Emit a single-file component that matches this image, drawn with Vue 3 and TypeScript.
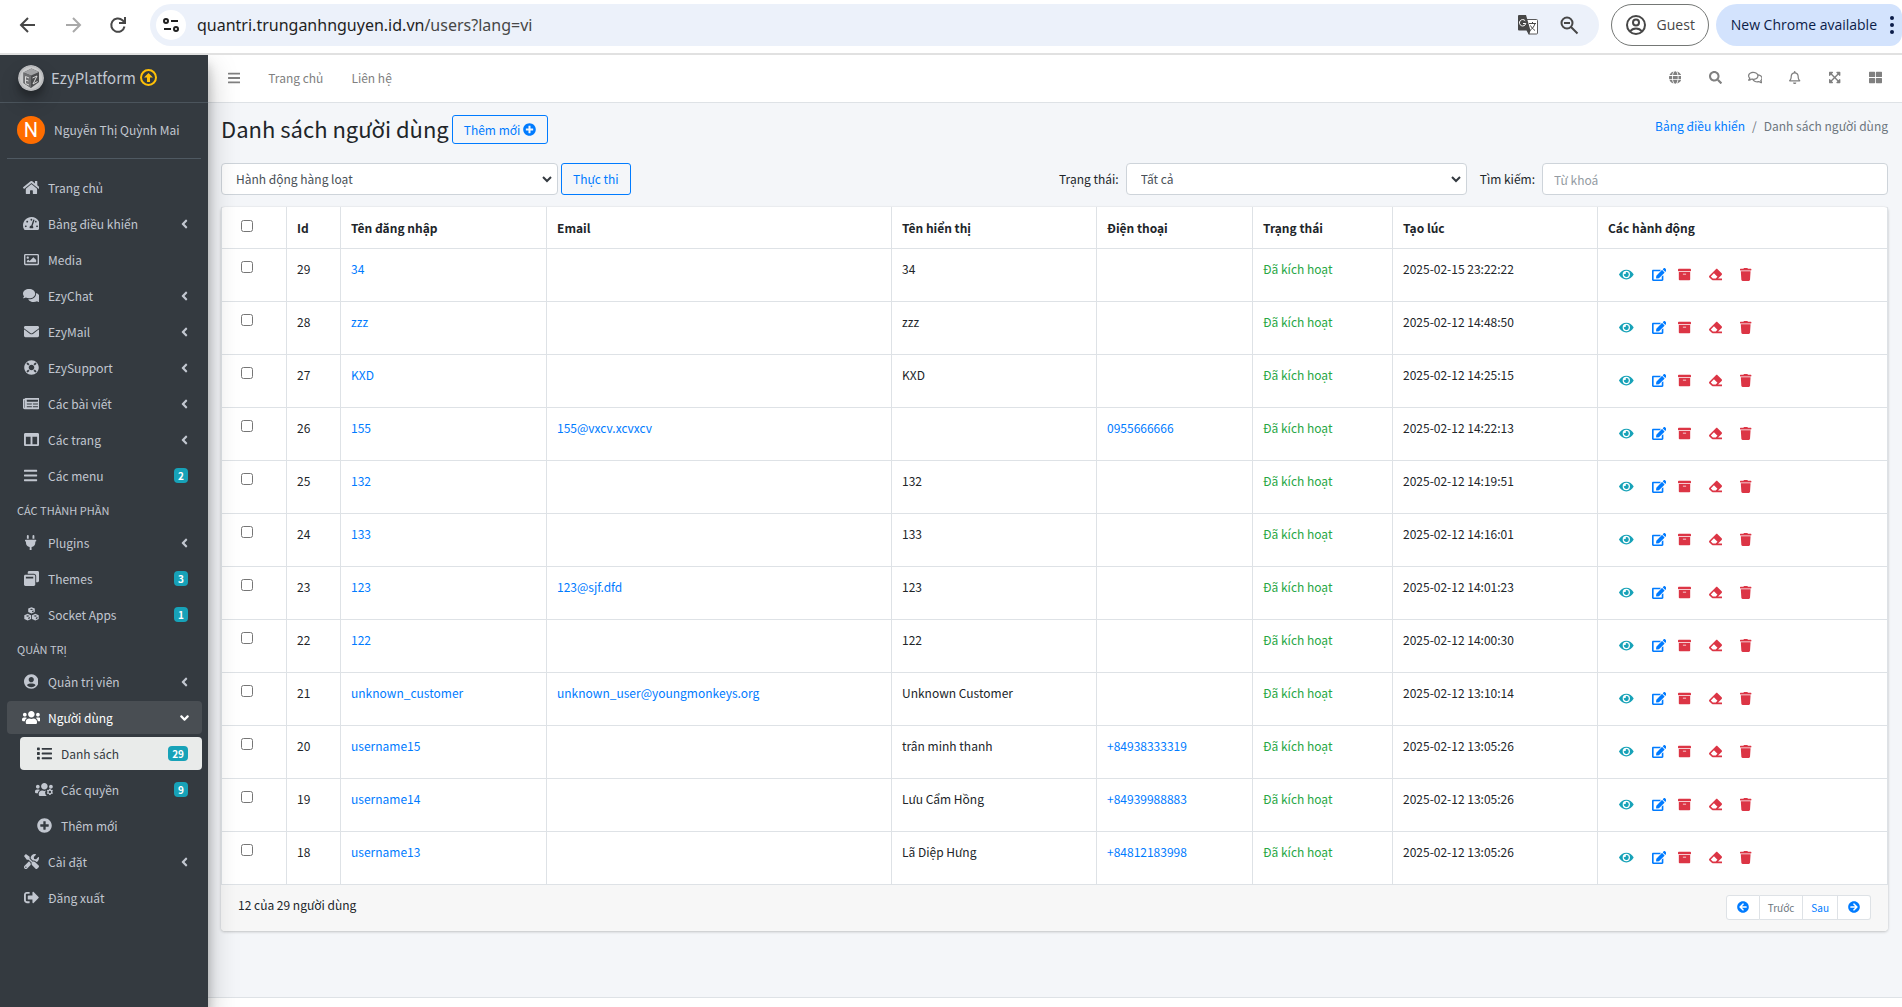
<script setup lang="ts">
import { h, ref } from 'vue'
import type { FunctionalComponent } from 'vue'

type Glyph = [width: number, path: string]

const glyphs: Record<string, Glyph> = {
  home: [576, 'M280.37 148.26L96 300.11V464a16 16 0 0 0 16 16l112.06-.29a16 16 0 0 0 15.92-16V368a16 16 0 0 1 16-16h64a16 16 0 0 1 16 16v95.64a16 16 0 0 0 16 16.05L464 480a16 16 0 0 0 16-16V300L295.67 148.26a12.19 12.19 0 0 0-15.3 0zM571.6 251.47L488 182.56V44.05a12 12 0 0 0-12-12h-56a12 12 0 0 0-12 12v72.61L318.47 43a48 48 0 0 0-61 0L4.34 251.47a12 12 0 0 0-1.6 16.9l25.5 31A12 12 0 0 0 45.15 301l235.22-193.74a12.19 12.19 0 0 1 15.3 0L530.9 301a12 12 0 0 0 16.9-1.6l25.5-31a12 12 0 0 0-1.7-16.93z'],
  gauge: [576, 'M288 32C128.94 32 0 160.94 0 320c0 52.8 14.25 102.26 39.06 144.8 5.61 9.62 16.3 15.2 27.44 15.2h443c11.14 0 21.83-5.58 27.44-15.2C561.75 422.26 576 372.8 576 320c0-159.06-128.94-288-288-288zm0 64c14.71 0 26.58 10.13 30.32 23.65-1.11 2.26-2.64 4.23-3.45 6.67l-9.22 27.67c-5.13 3.49-10.97 6.01-17.64 6.01-17.67 0-32-14.33-32-32S270.33 96 288 96zM96 384c-17.67 0-32-14.33-32-32s14.33-32 32-32 32 14.33 32 32-14.33 32-32 32zm48-160c-17.67 0-32-14.33-32-32s14.33-32 32-32 32 14.33 32 32-14.33 32-32 32zm246.77-72.41l-61.33 184C343.13 347.33 352 364.54 352 384c0 11.72-3.38 22.55-8.88 32H232.88c-5.5-9.45-8.88-20.28-8.88-32 0-33.94 26.5-61.43 59.9-63.59l61.34-184.01c4.17-12.56 17.73-19.45 30.36-15.17 12.57 4.19 19.35 17.79 15.17 30.36zm14.66 57.2l15.52-46.55c3.47-1.29 7.13-2.23 11.05-2.23 17.67 0 32 14.33 32 32s-14.33 32-32 32c-11.38-.01-20.89-6.28-26.57-15.22zM480 384c-17.67 0-32-14.33-32-32s14.33-32 32-32 32 14.33 32 32-14.33 32-32 32z'],
  image: [512, 'M464 64H48C21.49 64 0 85.49 0 112v288c0 26.51 21.49 48 48 48h416c26.51 0 48-21.49 48-48V112c0-26.51-21.49-48-48-48zm-6 336H54a6 6 0 0 1-6-6V118a6 6 0 0 1 6-6h404a6 6 0 0 1 6 6v276a6 6 0 0 1-6 6zM128 152c-22.091 0-40 17.909-40 40s17.909 40 40 40 40-17.909 40-40-17.909-40-40-40zM96 352h320v-80l-87.515-87.515c-4.686-4.686-12.284-4.686-16.971 0L192 304l-39.515-39.515c-4.686-4.686-12.284-4.686-16.971 0L96 304v48z'],
  comments: [576, 'M416 192c0-88.4-93.1-160-208-160S0 103.6 0 192c0 34.3 14.1 65.9 38 92-13.4 30.2-35.5 54.2-35.8 54.5-2.2 2.3-2.8 5.7-1.5 8.7S4.8 352 8 352c36.6 0 66.9-12.3 88.7-25 32.2 15.7 70.3 25 111.3 25 114.9 0 208-71.6 208-160zm122 220c23.9-26 38-57.7 38-92 0-66.9-53.5-124.2-129.3-148.1.9 6.6 1.3 13.3 1.3 20.1 0 105.9-107.7 192-240 192-10.8 0-21.3-.8-31.7-1.9C207.8 439.6 281.8 480 368 480c41 0 79.1-9.2 111.3-25 21.8 12.7 52.1 25 88.7 25 3.2 0 6.1-1.9 7.3-4.8 1.3-2.9.7-6.3-1.5-8.7-.3-.3-22.4-24.2-35.8-54.5z'],
  commentsLine: [576, 'M532 386.2c27.5-27.1 44-61.1 44-98.2 0-80-76.5-146.1-176.2-157.9C368.3 72.5 294.3 32 208 32 93.1 32 0 103.6 0 192c0 37 16.5 71 44 98.2-15.3 30.7-37.3 54.5-37.7 54.9-6.3 6.7-8.1 16.5-4.4 25 3.6 8.5 12 14 21.2 14 53.5 0 96.7-20.2 125.2-38.8 9.2 2.1 18.7 3.7 28.4 4.9C208.1 407.6 281.8 448 368 448c20.8 0 40.8-2.4 59.8-6.8C456.3 459.7 499.4 480 553 480c9.2 0 17.5-5.5 21.2-14 3.6-8.5 1.9-18.3-4.4-25-.4-.3-22.5-24.1-37.8-54.8zm-392.8-92.3L122.1 305c-14.1 9.1-28.5 16.3-43.1 21.4 2.7-4.7 5.4-9.7 8-14.8l15.5-31.1L77.7 256C64.2 242.6 48 220.7 48 192c0-60.7 73.3-112 160-112s160 51.3 160 112-73.3 112-160 112c-16.5 0-33-1.9-49-5.6l-19.8-4.5zM498.3 352l-24.7 24.4 15.5 31.1c2.6 5.1 5.3 10.1 8 14.8-14.6-5.1-29-12.3-43.1-21.4l-17.1-11.1-19.9 4.6c-16 3.7-32.5 5.6-49 5.6-54 0-102.2-20.1-131.3-49.7C338 339.5 416 272.9 416 192c0-3.4-.4-6.7-.7-10C479.7 196.5 528 238.8 528 288c0 28.7-16.2 50.6-29.7 64z'],
  envelope: [512, 'M502.3 190.8c3.9-3.1 9.7-.2 9.7 4.7V400c0 26.5-21.5 48-48 48H48c-26.5 0-48-21.5-48-48V195.6c0-5 5.7-7.8 9.7-4.7 22.4 17.4 52.1 39.5 154.1 113.6 21.1 15.4 56.7 47.8 92.2 47.6 35.7.3 72-32.8 92.3-47.6 102-74.1 131.6-96.3 154-113.7zM256 320c23.2.4 56.6-29.2 73.4-41.4 132.7-96.3 142.8-104.7 173.4-128.7 5.8-4.5 9.2-11.5 9.2-18.9v-19c0-26.5-21.5-48-48-48H48c-26.5 0-48 21.5-48 48v19c0 7.4 3.4 14.3 9.2 18.9 30.6 23.9 40.7 32.4 173.4 128.7 16.8 12.2 50.2 41.8 73.4 41.4z'],
  lifeRing: [512, 'M256 8C119.033 8 8 119.033 8 256s111.033 248 248 248 248-111.033 248-248S392.967 8 256 8zm173.696 119.559l-63.399 63.399c-10.987-18.559-26.67-34.252-45.255-45.255l63.399-63.399a218.396 218.396 0 0 1 45.255 45.255zM256 352c-53.019 0-96-42.981-96-96s42.981-96 96-96 96 42.981 96 96-42.981 96-96 96zM127.559 82.304l63.399 63.399c-18.559 10.987-34.252 26.67-45.255 45.255l-63.399-63.399a218.372 218.372 0 0 1 45.255-45.255zM82.304 384.441l63.399-63.399c10.987 18.559 26.67 34.252 45.255 45.255l-63.399 63.399a218.396 218.396 0 0 1-45.255-45.255zm302.137 45.255l-63.399-63.399c18.559-10.987 34.252-26.67 45.255-45.255l63.399 63.399a218.403 218.403 0 0 1-45.255 45.255z'],
  newspaper: [576, 'M552 64H88c-13.255 0-24 10.745-24 24v8H24c-13.255 0-24 10.745-24 24v272c0 30.928 25.072 56 56 56h472c26.51 0 48-21.49 48-48V88c0-13.255-10.745-24-24-24zM56 400a8 8 0 0 1-8-8V144h16v248a8 8 0 0 1-8 8zm236-16H140c-6.627 0-12-5.373-12-12v-8c0-6.627 5.373-12 12-12h152c6.627 0 12 5.373 12 12v8c0 6.627-5.373 12-12 12zm208 0H348c-6.627 0-12-5.373-12-12v-8c0-6.627 5.373-12 12-12h152c6.627 0 12 5.373 12 12v8c0 6.627-5.373 12-12 12zm-208-96H140c-6.627 0-12-5.373-12-12v-8c0-6.627 5.373-12 12-12h152c6.627 0 12 5.373 12 12v8c0 6.627-5.373 12-12 12zm208 0H348c-6.627 0-12-5.373-12-12v-8c0-6.627 5.373-12 12-12h152c6.627 0 12 5.373 12 12v8c0 6.627-5.373 12-12 12zm0-96H140c-6.627 0-12-5.373-12-12v-40c0-6.627 5.373-12 12-12h360c6.627 0 12 5.373 12 12v40c0 6.627-5.373 12-12 12z'],
  columns: [512, 'M464 32H48C21.49 32 0 53.49 0 80v352c0 26.51 21.49 48 48 48h416c26.51 0 48-21.49 48-48V80c0-26.51-21.49-48-48-48zM224 416H64V160h160v256zm224 0H288V160h160v256z'],
  bars: [448, 'M16 132h416c8.837 0 16-7.163 16-16V76c0-8.837-7.163-16-16-16H16C7.163 60 0 67.163 0 76v40c0 8.837 7.163 16 16 16zm0 160h416c8.837 0 16-7.163 16-16v-40c0-8.837-7.163-16-16-16H16c-8.837 0-16 7.163-16 16v40c0 8.837 7.163 16 16 16zm0 160h416c8.837 0 16-7.163 16-16v-40c0-8.837-7.163-16-16-16H16c-8.837 0-16 7.163-16 16v40c0 8.837 7.163 16 16 16z'],
  plug: [384, 'M320,32a32,32,0,0,0-64,0v96h64Zm48,128H16A16,16,0,0,0,0,176v32a16,16,0,0,0,16,16H32v32A160.07,160.07,0,0,0,160,412.8V512h64V412.8A160.07,160.07,0,0,0,352,256V224h16a16,16,0,0,0,16-16V176A16,16,0,0,0,368,160ZM128,32a32,32,0,0,0-64,0v96h64Z'],
  windows: [512, 'M512 48v288c0 26.5-21.5 48-48 48h-48V176c0-44.1-35.9-80-80-80H128V48c0-26.5 21.5-48 48-48h288c26.5 0 48 21.5 48 48zM384 176v288c0 26.5-21.5 48-48 48H48c-26.5 0-48-21.5-48-48V176c0-26.5 21.5-48 48-48h288c26.5 0 48 21.5 48 48zm-68 28c0-6.6-5.4-12-12-12H76c-6.6 0-12 5.4-12 12v52h252v-52z'],
  cubes: [512, 'M256 8l112 44v118l-112 48-112-48V52zM256 58l-62 22 62 24 62-24zM276 138v44l52-22v-44zM126 232l116 48v126l-116 56-116-56V280zM126 280l-62 24 62 26 62-26zM146 366v48l56-26v-46zM386 232l116 48v126l-116 56-116-56V280zM386 280l-62 24 62 26 62-26zM406 366v48l56-26v-46z'],
  userCircle: [496, 'M248 8C111 8 0 119 0 256s111 248 248 248 248-111 248-248S385 8 248 8zm0 96c48.6 0 88 39.4 88 88s-39.4 88-88 88-88-39.4-88-88 39.4-88 88-88zm0 344c-58.7 0-111.3-26.6-146.5-68.2 18.8-35.4 55.6-59.8 98.5-59.8 2.4 0 4.8.4 7.1 1.1 13 4.2 26.6 6.9 40.9 6.9 14.3 0 28-2.7 40.9-6.9 2.3-.7 4.7-1.1 7.1-1.1 42.9 0 79.7 24.4 98.5 59.8C359.3 421.4 306.7 448 248 448z'],
  users: [640, 'M96 224c35.3 0 64-28.7 64-64s-28.7-64-64-64-64 28.7-64 64 28.7 64 64 64zm448 0c35.3 0 64-28.7 64-64s-28.7-64-64-64-64 28.7-64 64 28.7 64 64 64zm32 32h-64c-17.6 0-33.5 7.1-45.1 18.6 40.3 22.1 68.9 62 75.1 109.4h66c17.7 0 32-14.3 32-32v-32c0-35.3-28.7-64-64-64zm-256 0c61.9 0 112-50.1 112-112S381.9 32 320 32 208 82.1 208 144s50.1 112 112 112zm76.8 32h-8.3c-20.8 10-43.9 16-68.5 16s-47.6-6-68.5-16h-8.3C179.6 288 128 339.6 128 403.2V432c0 26.5 21.5 48 48 48h288c26.5 0 48-21.5 48-48v-28.8c0-63.6-51.6-115.2-115.2-115.2zm-223.7-13.4C161.5 263.1 145.6 256 128 256H64c-35.3 0-64 28.7-64 64v32c0 17.7 14.3 32 32 32h65.9c6.3-47.4 34.9-87.3 75.2-109.4z'],
  usersCog: [640, 'M96 224c35.3 0 64-28.7 64-64s-28.7-64-64-64-64 28.7-64 64 28.7 64 64 64zM320 256c61.9 0 112-50.1 112-112S381.9 32 320 32 208 82.1 208 144s50.1 112 112 112zM544 224c35.3 0 64-28.7 64-64s-28.7-64-64-64-64 28.7-64 64 28.7 64 64 64zM173.1 274.6C161.5 263.1 145.6 256 128 256H64c-35.3 0-64 28.7-64 64v32c0 17.7 14.3 32 32 32h65.9c6.3-47.4 34.9-87.3 75.2-109.4zM352 390c-18-34 0-70 28-102-18 8-40 16-60 16-24.6 0-47.6-6-68.5-16h-8.3C179.6 288 128 339.6 128 403.2V432c0 26.5 21.5 48 48 48h230c-30-20-50-55-54-90zM478 256l8-26h44l8 30 22 12 28-8 24 38-20 22v28l20 22-24 38-28-8-22 12-8 30h-44l-8-30-22-12-28 8-24-38 20-22v-28l-20-22 24-38 28 8zM508 296a42 42 0 1 0 0 84 42 42 0 0 0 0-84z'],
  list: [512, 'M80 368H16a16 16 0 0 0-16 16v64a16 16 0 0 0 16 16h64a16 16 0 0 0 16-16v-64a16 16 0 0 0-16-16zm0-320H16A16 16 0 0 0 0 64v64a16 16 0 0 0 16 16h64a16 16 0 0 0 16-16V64a16 16 0 0 0-16-16zm0 160H16a16 16 0 0 0-16 16v64a16 16 0 0 0 16 16h64a16 16 0 0 0 16-16v-64a16 16 0 0 0-16-16zm416 176H176a16 16 0 0 0-16 16v32a16 16 0 0 0 16 16h320a16 16 0 0 0 16-16v-32a16 16 0 0 0-16-16zm0-320H176a16 16 0 0 0-16 16v32a16 16 0 0 0 16 16h320a16 16 0 0 0 16-16V80a16 16 0 0 0-16-16zm0 160H176a16 16 0 0 0-16 16v32a16 16 0 0 0 16 16h320a16 16 0 0 0 16-16v-32a16 16 0 0 0-16-16z'],
  plus: [512, 'M256 8C119 8 8 119 8 256s111 248 248 248 248-111 248-248S393 8 256 8zm144 276c0 6.6-5.4 12-12 12h-92v92c0 6.6-5.4 12-12 12h-56c-6.6 0-12-5.4-12-12v-92h-92c-6.6 0-12-5.4-12-12v-56c0-6.6 5.4-12 12-12h92v-92c0-6.6 5.4-12 12-12h56c6.6 0 12 5.4 12 12v92h92c6.6 0 12 5.4 12 12v56z'],
  tools: [512, 'M501.1 395.7L384 278.6c-23.1-23.1-57.6-27.6-85.4-13.9L192 158.1V96L64 0 0 64l96 128h62.1l106.6 106.6c-13.6 27.8-9.2 62.3 13.9 85.4l117.1 117.1c14.6 14.6 38.2 14.6 52.7 0l52.7-52.7c14.5-14.6 14.5-38.2 0-52.7zM331.7 225c28.3 0 54.9 11 74.9 31l19.4 19.4c15.8-6.9 30.8-16.5 43.8-29.5 37.1-37.1 49.7-89.3 37.9-136.7-2.2-9-13.5-12.1-20.1-5.5l-74.4 74.4-67.9-11.3L334 98.9l74.4-74.4c6.6-6.6 3.4-17.9-5.7-20.2-47.4-11.7-99.6.9-136.6 37.9-28.5 28.5-41.9 66.1-41.2 103.6l82.1 82.1c8.1-1.9 16.5-2.9 24.7-2.9zm-103.9 82l-56.7-56.7L18.7 402.8c-25 25-25 65.5 0 90.5s65.5 25 90.5 0l123.6-123.6c-7.6-19.9-9.9-41.6-5-62.7zM64 472c-13.2 0-24-10.8-24-24 0-13.3 10.7-24 24-24s24 10.7 24 24c0 13.2-10.7 24-24 24z'],
  signOut: [512, 'M497 273L329 441c-15 15-41 4.5-41-17v-96H152c-13.3 0-24-10.7-24-24v-96c0-13.3 10.7-24 24-24h136V88c0-21.4 25.9-32 41-17l168 168c9.3 9.4 9.3 24.6 0 34zM192 436v-40c0-6.6-5.4-12-12-12H96c-17.7 0-32-14.3-32-32V160c0-17.7 14.3-32 32-32h84c6.6 0 12-5.4 12-12V76c0-6.6-5.4-12-12-12H96c-53 0-96 43-96 96v192c0 53 43 96 96 96h84c6.6 0 12-5.4 12-12z'],
  angle: [256, 'M31.7 239l136-136c9.4-9.4 24.6-9.4 33.9 0l22.6 22.6c9.4 9.4 9.4 24.6 0 33.9L127.9 256l96.4 96.4c9.4 9.4 9.4 24.6 0 33.9L201.7 409c-9.4 9.4-24.6 9.4-33.9 0l-136-136c-9.5-9.4-9.5-24.6-.1-34z'],
  globe: [496, 'M336.5 160C322 70.7 287.8 8 248 8s-74 62.7-88.5 152h177zM152 256c0 22.2 1.2 43.5 3.3 64h185.3c2.1-20.5 3.3-41.8 3.3-64s-1.2-43.5-3.3-64H155.3c-2.1 20.5-3.3 41.8-3.3 64zm324.7-96c-28.6-67.9-86.5-120.4-158-141.6 24.4 33.8 41.2 84.7 50 141.6h108zM177.2 18.4C105.8 39.6 47.8 92.1 19.3 160h108c8.7-56.9 25.5-107.8 49.9-141.6zM487.4 192H372.7c2.1 21 3.3 42.5 3.3 64s-1.2 43-3.3 64h114.6c5.5-20.5 8.6-41.8 8.6-64s-3.1-43.5-8.5-64zM120 256c0-21.5 1.2-43 3.3-64H8.6C3.2 212.5 0 233.8 0 256s3.2 43.5 8.6 64h114.6c-2-21-3.2-42.5-3.2-64zm39.5 96c14.5 89.3 48.7 152 88.5 152s74-62.7 88.5-152h-177zm159.3 141.6c71.4-21.2 129.4-73.7 158-141.6h-108c-8.8 56.9-25.6 107.8-50 141.6zM19.3 352c28.6 67.9 86.5 120.4 158 141.6-24.4-33.8-41.2-84.7-50-141.6h-108z'],
  search: [512, 'M505 442.7L405.3 343c-4.5-4.5-10.6-7-17-7H372c27.6-35.3 44-79.7 44-128C416 93.1 322.9 0 208 0S0 93.1 0 208s93.1 208 208 208c48.3 0 92.7-16.4 128-44v16.3c0 6.4 2.5 12.5 7 17l99.7 99.7c9.4 9.4 24.6 9.4 33.9 0l28.3-28.3c9.4-9.4 9.4-24.6.1-34zM208 336c-70.7 0-128-57.2-128-128 0-70.7 57.2-128 128-128 70.7 0 128 57.2 128 128 0 70.7-57.2 128-128 128z'],
  bell: [448, 'M439.39 362.29c-19.32-20.76-55.47-51.99-55.47-154.29 0-77.7-54.48-139.9-127.94-155.16V32c0-17.67-14.32-32-31.98-32s-31.98 14.33-31.98 32v20.84C118.56 68.1 64.08 130.3 64.08 208c0 102.3-36.15 133.53-55.47 154.29-6 6.45-8.66 14.16-8.61 21.71.11 16.4 12.98 32 32.1 32h383.8c19.12 0 32-15.6 32.1-32 .05-7.55-2.61-15.27-8.61-21.71zM67.53 368c21.22-27.97 44.42-74.33 44.53-159.42 0-.2-.06-.38-.06-.58 0-61.86 50.14-112 112-112s112 50.14 112 112c0 .2-.06.38-.06.58.11 85.1 23.31 131.46 44.53 159.42H67.53zM224 512c35.32 0 63.97-28.65 63.97-64H160.03c0 35.35 28.65 64 63.97 64z'],
  expand: [448, 'M448 344v112a23.94 23.94 0 0 1-24 24H312c-21.39 0-32.09-25.9-17-41l36.2-36.2L224 295.6 116.77 402.9 153 439c15.09 15.1 4.39 41-17 41H24a23.94 23.94 0 0 1-24-24V344c0-21.4 25.89-32.1 41-17l36.19 36.2L184.46 256 77.18 148.7 41 185c-15.1 15.1-41 4.4-41-17V56a23.94 23.94 0 0 1 24-24h112c21.39 0 32.09 25.9 17 41l-36.2 36.2L224 216.4l107.23-107.3L295 73c-15.09-15.1-4.39-41 17-41h112a23.94 23.94 0 0 1 24 24v112c0 21.4-25.89 32.1-41 17l-36.19-36.2L263.54 256l107.28 107.3L407 327.1c15.1-15.2 41-4.5 41 16.9z'],
  thLarge: [512, 'M296 32h192c13.255 0 24 10.745 24 24v160c0 13.255-10.745 24-24 24H296c-13.255 0-24-10.745-24-24V56c0-13.255 10.745-24 24-24zm-80 0H24C10.745 32 0 42.745 0 56v160c0 13.255 10.745 24 24 24h192c13.255 0 24-10.745 24-24V56c0-13.255-10.745-24-24-24zM0 296v160c0 13.255 10.745 24 24 24h192c13.255 0 24-10.745 24-24V296c0-13.255-10.745-24-24-24H24c-13.255 0-24 10.745-24 24zm296 184h192c13.255 0 24-10.745 24-24V296c0-13.255-10.745-24-24-24H296c-13.255 0-24 10.745-24 24v160c0 13.255 10.745 24 24 24z'],
  eye: [576, 'M572.52 241.4C518.29 135.59 410.93 64 288 64S57.68 135.64 3.48 241.41a32.35 32.35 0 0 0 0 29.19C57.71 376.41 165.07 448 288 448s230.32-71.64 284.52-177.41a32.35 32.35 0 0 0 0-29.19zM288 400a144 144 0 1 1 144-144 143.93 143.93 0 0 1-144 144zm0-240a95.31 95.31 0 0 0-25.31 3.79 47.85 47.85 0 0 1-66.9 66.9A95.78 95.78 0 1 0 288 160z'],
  edit: [576, 'M402.6 83.2l90.2 90.2c3.8 3.8 3.8 10 0 13.8L274.4 405.6l-92.8 10.3c-12.4 1.4-22.9-9.1-21.5-21.5l10.3-92.8L388.8 83.2c3.8-3.8 10-3.8 13.8 0zm162-22.9l-48.8-48.8c-15.2-15.2-39.9-15.2-55.2 0l-35.4 35.4c-3.8 3.8-3.8 10 0 13.8l90.2 90.2c3.8 3.8 10 3.8 13.8 0l35.4-35.4c15.2-15.3 15.2-40 0-55.2zM384 346.2V448H64V128h229.8c3.2 0 6.2-1.3 8.5-3.5l40-40c7.6-7.6 2.2-20.5-8.5-20.5H48C21.5 64 0 85.5 0 112v352c0 26.5 21.5 48 48 48h352c26.5 0 48-21.5 48-48V306.2c0-10.7-12.9-16-20.5-8.5l-40 40c-2.2 2.3-3.5 5.3-3.5 8.5z'],
  archive: [512, 'M32 448c0 17.7 14.3 32 32 32h384c17.7 0 32-14.3 32-32V160H32v288zm160-212c0-6.6 5.4-12 12-12h104c6.6 0 12 5.4 12 12v8c0 6.6-5.4 12-12 12H204c-6.6 0-12-5.4-12-12v-8zM480 32H32C14.3 32 0 46.3 0 64v48c0 8.8 7.2 16 16 16h480c8.8 0 16-7.2 16-16V64c0-17.7-14.3-32-32-32z'],
  eraser: [512, 'M497.941 273.941c18.745-18.745 18.745-49.137 0-67.882l-160-160c-18.745-18.745-49.136-18.746-67.883 0l-256 256c-18.745 18.745-18.745 49.137 0 67.882l96 96A48.004 48.004 0 0 0 144 480h356c6.627 0 12-5.373 12-12v-40c0-6.627-5.373-12-12-12H355.883l142.058-142.059zm-302.627-62.627l137.373 137.373L265.373 416H150.628l-80-80 124.686-124.686z'],
  trash: [448, 'M432 32H312l-9.4-18.7A24 24 0 0 0 281.1 0H166.8a23.72 23.72 0 0 0-21.4 13.3L136 32H16A16 16 0 0 0 0 48v32a16 16 0 0 0 16 16h416a16 16 0 0 0 16-16V48a16 16 0 0 0-16-16zM53.2 467a48 48 0 0 0 47.9 45h245.8a48 48 0 0 0 47.9-45L416 128H32z'],
  arrow: [512, 'M256 504C119 504 8 393 8 256S119 8 256 8s248 111 248 248-111 248-248 248zm28.9-143.6L209.4 288H392c13.3 0 24-10.7 24-24v-16c0-13.3-10.7-24-24-24H209.4l75.5-72.4c9.7-9.3 9.9-24.8.4-34.3l-11-10.9c-9.4-9.4-24.6-9.4-33.9 0L107.7 239c-9.4 9.4-9.4 24.6 0 33.9l132.7 132.7c9.4 9.4 24.6 9.4 33.9 0l11-10.9c9.5-9.5 9.3-25-.4-34.3z'],
}

const Icon: FunctionalComponent<{ name: string; size: number }> = (props) => {
  const [width, path] = glyphs[props.name]
  return h(
    'svg',
    {
      viewBox: `0 0 ${width} 512`,
      width: (width / 512) * props.size,
      height: props.size,
      fill: 'currentColor',
      'fill-rule': props.name === 'cubes' || props.name === 'usersCog' ? 'evenodd' : 'nonzero',
      'aria-hidden': 'true',
    },
    [h('path', { d: path })],
  )
}
Icon.props = ['name', 'size']

interface NavItem {
  icon: string
  label: string
  badge?: number
  caret?: boolean
  open?: boolean
  children?: NavItem[]
  current?: boolean
}

const navGroups: { title?: string; items: NavItem[] }[] = [
  {
    items: [
      { icon: 'home', label: 'Trang chủ' },
      { icon: 'gauge', label: 'Bảng điều khiển', caret: true },
      { icon: 'image', label: 'Media' },
      { icon: 'comments', label: 'EzyChat', caret: true },
      { icon: 'envelope', label: 'EzyMail', caret: true },
      { icon: 'lifeRing', label: 'EzySupport', caret: true },
      { icon: 'newspaper', label: 'Các bài viết', caret: true },
      { icon: 'columns', label: 'Các trang', caret: true },
      { icon: 'bars', label: 'Các menu', badge: 2 },
    ],
  },
  {
    title: 'CÁC THÀNH PHẦN',
    items: [
      { icon: 'plug', label: 'Plugins', caret: true },
      { icon: 'windows', label: 'Themes', badge: 3 },
      { icon: 'cubes', label: 'Socket Apps', badge: 1 },
    ],
  },
  {
    title: 'QUẢN TRỊ',
    items: [
      { icon: 'userCircle', label: 'Quản trị viên', caret: true },
      {
        icon: 'users',
        label: 'Người dùng',
        caret: true,
        open: true,
        children: [
          { icon: 'list', label: 'Danh sách', badge: 29, current: true },
          { icon: 'usersCog', label: 'Các quyền', badge: 9 },
          { icon: 'plus', label: 'Thêm mới' },
        ],
      },
      { icon: 'tools', label: 'Cài đặt', caret: true },
      { icon: 'signOut', label: 'Đăng xuất' },
    ],
  },
]

const toolbarIcons = [
  { icon: 'globe', label: 'Ngôn ngữ' },
  { icon: 'search', label: 'Tìm kiếm' },
  { icon: 'commentsLine', label: 'Tin nhắn' },
  { icon: 'bell', label: 'Thông báo' },
  { icon: 'expand', label: 'Toàn màn hình' },
  { icon: 'thLarge', label: 'Tuỳ chỉnh' },
]

interface User {
  id: number
  username: string
  email?: string
  name?: string
  phone?: string
  created: string
}

const users: User[] = [
  { id: 29, username: '34', name: '34', created: '2025-02-15 23:22:22' },
  { id: 28, username: 'zzz', name: 'zzz', created: '2025-02-12 14:48:50' },
  { id: 27, username: 'KXD', name: 'KXD', created: '2025-02-12 14:25:15' },
  { id: 26, username: '155', email: '155@vxcv.xcvxcv', phone: '0955666666', created: '2025-02-12 14:22:13' },
  { id: 25, username: '132', name: '132', created: '2025-02-12 14:19:51' },
  { id: 24, username: '133', name: '133', created: '2025-02-12 14:16:01' },
  { id: 23, username: '123', email: '123@sjf.dfd', name: '123', created: '2025-02-12 14:01:23' },
  { id: 22, username: '122', name: '122', created: '2025-02-12 14:00:30' },
  { id: 21, username: 'unknown_customer', email: 'unknown_user@youngmonkeys.org', name: 'Unknown Customer', created: '2025-02-12 13:10:14' },
  { id: 20, username: 'username15', name: 'trân minh thanh', phone: '+84938333319', created: '2025-02-12 13:05:26' },
  { id: 19, username: 'username14', name: 'Lưu Cẩm Hồng', phone: '+84939988883', created: '2025-02-12 13:05:26' },
  { id: 18, username: 'username13', name: 'Lã Diệp Hưng', phone: '+84812183998', created: '2025-02-12 13:05:26' },
]

const actions = [
  { icon: 'eye', label: 'Xem', tone: 'info' },
  { icon: 'edit', label: 'Sửa', tone: 'primary' },
  { icon: 'archive', label: 'Lưu trữ', tone: 'danger' },
  { icon: 'eraser', label: 'Xoá dữ liệu', tone: 'danger' },
  { icon: 'trash', label: 'Xoá', tone: 'danger' },
]

const selected = ref<number[]>([])
const keyword = ref('')

function toggleAll(event: Event) {
  selected.value = (event.target as HTMLInputElement).checked ? users.map((u) => u.id) : []
}
</script>

<template>
  <div class="screen">
    <header class="browser">
      <div class="browser-nav">
        <button type="button" aria-label="Back">
          <svg width="20" height="20" viewBox="0 0 20 20" fill="none" stroke="#474747" stroke-width="2"><path d="M17 10H3.500M10 3l-7 7 7 7" /></svg>
        </button>
        <button type="button" aria-label="Forward">
          <svg width="20" height="20" viewBox="0 0 20 20" fill="none" stroke="#a9a9a9" stroke-width="2"><path d="M3 10h13.500M10 3l7 7-7 7" /></svg>
        </button>
        <button type="button" aria-label="Reload">
          <svg width="20" height="20" viewBox="0 0 20 20" fill="none" stroke="#474747" stroke-width="2"><path d="M16.500 11.500A6.700 6.700 0 1 1 14.500 5.200l2 2M17 2v6h-6" /></svg>
        </button>
      </div>
      <div class="omnibox">
        <span class="site-info">
          <svg width="18" height="18" viewBox="0 0 18 18" fill="none" stroke="#1f1f1f" stroke-width="2"><circle cx="4" cy="5" r="2" /><path d="M9 5h7M2 13h7" /><circle cx="14" cy="13" r="2" /></svg>
        </span>
        <span class="url">quantri.trunganhnguyen.id.vn<span class="path">/users?lang=vi</span></span>
        <button type="button" aria-label="Translate">
          <svg width="22" height="22" viewBox="0 0 22 22">
            <path d="M9 5.500h10.500a1 1 0 0 1 1 1V19a1 1 0 0 1-1 1H12z" fill="#fff" stroke="#5a5a5a" stroke-width="1" />
            <path d="M2 1h7l4.500 15.500H2a1 1 0 0 1-1-1V2a1 1 0 0 1 1-1zM9.500 16.500h4L12 21z" fill="#474747" />
            <path d="M8.200 6.800a3.200 3.200 0 1 0 .6 2.700H6" fill="none" stroke="#fff" stroke-width="1" />
            <path d="M12 9.500h7M15.500 8v1.500M18 9.500c-1 3.500-3 5.500-5 7M13.500 11.500c1 2 2.500 3.500 4.500 5" fill="none" stroke="#474747" stroke-width="1" />
          </svg>
        </button>
        <button type="button" aria-label="Zoom">
          <svg width="20" height="20" viewBox="0 0 20 20" fill="none" stroke="#474747" stroke-width="2"><circle cx="8" cy="8" r="5.500" /><path d="M12 12l6.500 6.500M5 8h6" /></svg>
        </button>
      </div>
      <button type="button" class="guest">
        <svg width="22" height="22" viewBox="0 0 22 22" fill="none" stroke="#474747" stroke-width="2"><circle cx="11" cy="11" r="9" /><circle cx="11" cy="8.500" r="3" /><path d="M5 17.500c3-4 9-4 12 0" /></svg>
        Guest
      </button>
      <button type="button" class="update">
        New Chrome available
        <svg width="4" height="20" viewBox="0 0 4 20" fill="#0b1c48"><circle cx="2" cy="3" r="2" /><circle cx="2" cy="10" r="2" /><circle cx="2" cy="17" r="2" /></svg>
      </button>
    </header>

    <div class="app">
      <aside class="sidebar">
        <a class="brand" href="#">
          <svg class="logo" width="26" height="26" viewBox="0 0 26 26">
            <circle cx="13" cy="13" r="13" fill="#b9babc" />
            <circle cx="13" cy="13" r="11" fill="#c9cacb" />
            <path d="M5.500 7.500l8-4 7.500 3.500v10l-8 6-7.500-5z" fill="#4b4c4e" />
            <path d="M5.500 7.500l8-4 7.500 3.500-8 3.500z" fill="#a2a3a5" />
            <path d="M5.500 7.500l7.500 3V23l-7.500-5z" fill="#6f7072" />
            <path d="M11 13l-3.500-1.500v7L11 20M7.500 15l3 1M14.500 13l4.500-2-4 8 4.500-2.500" fill="none" stroke="#d8d8d8" stroke-width="1" />
          </svg>
          <span class="brand-name">EzyPlatform</span>
          <svg width="17" height="17" viewBox="0 0 17 17"><circle cx="8.500" cy="8.500" r="7.500" fill="none" stroke="#ffc107" stroke-width="2" /><path d="M8.500 4L13 8.500h-3V13H7V8.500H4z" fill="#ffc107" /></svg>
        </a>
        <div class="user-panel">
          <span class="avatar">N</span>
          <a href="#">Nguyễn Thị Quỳnh Mai</a>
        </div>
        <nav class="menu" aria-label="Menu chính">
          <template v-for="(group, g) in navGroups" :key="g">
            <h2 v-if="group.title">{{ group.title }}</h2>
            <ul>
              <li v-for="item in group.items" :key="item.label">
                <a href="#" :class="['nav-link', { open: item.open }]">
                  <span class="nav-icon"><Icon :name="item.icon" :size="15" /></span>
                  <span class="nav-label">{{ item.label }}</span>
                  <span v-if="item.badge" class="badge">{{ item.badge }}</span>
                  <Icon v-if="item.caret" class="caret" name="angle" :size="14" />
                </a>
                <ul v-if="item.children" class="submenu">
                  <li v-for="child in item.children" :key="child.label">
                    <a href="#" :class="['nav-link', { current: child.current }]">
                      <span class="nav-icon"><Icon :name="child.icon" :size="15" /></span>
                      <span class="nav-label">{{ child.label }}</span>
                      <span v-if="child.badge" class="badge">{{ child.badge }}</span>
                    </a>
                  </li>
                </ul>
              </li>
            </ul>
          </template>
        </nav>
      </aside>

      <div class="workspace">
        <div class="topbar">
          <button type="button" class="toggle" aria-label="Thu gọn menu"><Icon name="bars" :size="14" /></button>
          <a href="#">Trang chủ</a>
          <a href="#">Liên hệ</a>
          <div class="tools">
            <button v-for="tool in toolbarIcons" :key="tool.icon" type="button" :aria-label="tool.label">
              <Icon :name="tool.icon" :size="13" />
            </button>
          </div>
        </div>

        <main class="content">
          <div class="heading">
            <h1>Danh sách người dùng</h1>
            <button type="button" class="btn">Thêm mới <Icon name="plus" :size="13" /></button>
            <nav class="breadcrumb" aria-label="Đường dẫn">
              <a href="#">Bảng điều khiển</a><span>/</span><span>Danh sách người dùng</span>
            </nav>
          </div>

          <form class="filters" @submit.prevent>
            <select class="control bulk" aria-label="Hành động hàng loạt">
              <option>Hành động hàng loạt</option>
            </select>
            <button type="submit" class="btn">Thực thi</button>
            <label for="status">Trạng thái:</label>
            <select id="status" class="control status">
              <option>Tất cả</option>
            </select>
            <label for="keyword">Tìm kiếm:</label>
            <input id="keyword" v-model="keyword" class="control keyword" type="text" placeholder="Từ khoá" />
          </form>

          <section class="card">
            <table>
              <colgroup>
                <col class="c-check" /><col class="c-id" /><col class="c-user" /><col class="c-email" /><col class="c-name" />
                <col class="c-phone" /><col class="c-status" /><col class="c-created" /><col class="c-actions" />
              </colgroup>
              <thead>
                <tr>
                  <th class="check"><input type="checkbox" aria-label="Chọn tất cả" @change="toggleAll" /></th>
                  <th>Id</th>
                  <th>Tên đăng nhập</th>
                  <th>Email</th>
                  <th>Tên hiển thị</th>
                  <th>Điện thoại</th>
                  <th>Trạng thái</th>
                  <th>Tạo lúc</th>
                  <th>Các hành động</th>
                </tr>
              </thead>
              <tbody>
                <tr v-for="user in users" :key="user.id">
                  <td class="check"><input v-model="selected" type="checkbox" :value="user.id" :aria-label="`Chọn ${user.username}`" /></td>
                  <td>{{ user.id }}</td>
                  <td><a href="#">{{ user.username }}</a></td>
                  <td><a v-if="user.email" :href="`mailto:${user.email}`">{{ user.email }}</a></td>
                  <td>{{ user.name }}</td>
                  <td><a v-if="user.phone" :href="`tel:${user.phone}`">{{ user.phone }}</a></td>
                  <td class="active">Đã kích hoạt</td>
                  <td>{{ user.created }}</td>
                  <td>
                    <div class="actions">
                      <button v-for="action in actions" :key="action.icon" type="button" :class="[action.tone, action.icon]" :aria-label="action.label">
                        <Icon :name="action.icon" :size="13" />
                      </button>
                    </div>
                  </td>
                </tr>
              </tbody>
            </table>
            <footer class="card-footer">
              <span>12 của 29 người dùng</span>
              <nav class="pagination" aria-label="Phân trang">
                <a href="#" aria-label="Trang đầu"><Icon name="arrow" :size="12" /></a>
                <a class="disabled" href="#">Trước</a>
                <a href="#">Sau</a>
                <a href="#" aria-label="Trang cuối"><Icon class="flip" name="arrow" :size="12" /></a>
              </nav>
            </footer>
          </section>
        </main>
        <footer class="page-footer"></footer>
      </div>
    </div>
  </div>
</template>

<style>
body {
  margin: 0;
}
</style>

<style scoped>
* {
  box-sizing: border-box;
}

.screen {
  display: flex;
  flex-direction: column;
  min-height: 100vh;
  background: #fff;
  color: #212529;
  font-family: 'Noto Sans CJK SC', 'Noto Sans', sans-serif;
  font-size: 12px;
  line-height: 20px;
}

button,
input,
select {
  font: inherit;
}

button {
  display: inline-flex;
  align-items: center;
  justify-content: center;
  padding: 0;
  border: 0;
  background: none;
  color: inherit;
}

a {
  color: #007bff;
  text-decoration: none;
}

svg {
  display: block;
  flex: none;
}

ul {
  margin: 0;
  padding: 0;
  list-style: none;
}

/* Browser bar */
.browser {
  display: flex;
  align-items: center;
  height: 55px;
  padding-bottom: 4px;
  border-bottom: 2px solid #e1e1e1;
  font-family: 'Open Sans', 'Noto Sans', sans-serif;
  font-size: 14px;
  color: #474747;
}

.browser-nav {
  display: flex;
  gap: 25px;
  width: 150px;
  padding-left: 18px;
}

.omnibox {
  display: flex;
  flex: 1;
  align-items: center;
  height: 42px;
  padding: 0 20px 0 6px;
  border-radius: 21px;
  background: #ecf1fa;
}

.site-info {
  display: flex;
  align-items: center;
  justify-content: center;
  width: 30px;
  height: 30px;
  margin-right: 11px;
  border-radius: 50%;
  background: #fff;
}

.url {
  flex: 1;
  color: #1f1f1f;
  font-family: 'Noto Sans', sans-serif;
  font-size: 16px;
}

.path {
  color: #474747;
}

.omnibox button + button {
  margin-left: 20px;
}

.guest {
  gap: 10px;
  width: 98px;
  height: 42px;
  margin: 0 7px 0 12px;
  border: 1px solid #747775;
  border-radius: 21px;
}

.update {
  gap: 13px;
  height: 42px;
  padding: 0 8px 0 15px;
  border-radius: 21px 12px 12px 21px;
  background: #d3e3fd;
  color: #0b1c48;
}

/* Sidebar */
.app {
  display: flex;
  flex: 1;
  background: #f4f6f9;
}

.sidebar {
  z-index: 1;
  flex: none;
  width: 208px;
  background: #343a40;
  color: #c2c7d0;
  box-shadow: 0 14px 28px rgba(0, 0, 0, 0.25), 0 10px 10px rgba(0, 0, 0, 0.22);
  clip-path: inset(0 -40px 0 0);
}

.sidebar a {
  color: inherit;
}

.brand {
  display: flex;
  align-items: center;
  height: 48px;
  padding: 0 0 2px 18px;
  border-bottom: 1px solid #4b545c;
}

.logo {
  border-radius: 50%;
  box-shadow: 0 6px 6px rgba(0, 0, 0, 0.23), 0 10px 20px rgba(0, 0, 0, 0.19);
}

.brand-name {
  margin: 0 4px 0 7px;
  font-size: 15px;
}

.user-panel {
  display: flex;
  align-items: center;
  gap: 9px;
  height: 56px;
  margin: 0 7px;
  padding: 0 0 2px 10px;
  border-bottom: 1px solid #4f5962;
}

.avatar {
  width: 28px;
  height: 28px;
  border-radius: 50%;
  background: #ff6d00;
  color: #fff;
  font-family: Roboto, sans-serif;
  font-size: 20px;
  line-height: 29px;
  text-align: center;
}

.menu {
  padding: 12px 6px 0 7px;
}

.menu h2 {
  margin: 0;
  padding: 5px 10px 6px;
  font-size: 11px;
  font-weight: 400;
  line-height: 20px;
}

.nav-link {
  display: flex;
  align-items: center;
  height: 33px;
  margin-bottom: 3px;
  padding: 0 14px 0 12px;
  border-radius: 4px;
}

.nav-icon {
  display: flex;
  justify-content: center;
  width: 24px;
  margin-right: 5px;
}

.nav-label {
  flex: 1;
}

.nav-link.open {
  background: #494e53;
  color: #fff;
}

.open .caret {
  transform: rotate(-90deg);
}

.submenu {
  padding-left: 13px;
}

.nav-link.current {
  background: #e9ebea;
  color: #343a40;
}

.badge {
  padding: 0 4px;
  border-radius: 4px;
  background: #17a2b8;
  color: #fff;
  font-size: 10px;
  font-weight: 700;
  line-height: 15px;
}

/* Workspace */
.workspace {
  display: flex;
  flex: 1;
  flex-direction: column;
  min-width: 0;
}

.topbar {
  display: flex;
  align-items: center;
  gap: 28px;
  height: 48px;
  padding: 0 17px 2px 20px;
  border-bottom: 1px solid #dee2e6;
  background: #fff;
  color: #808080;
}

.topbar a {
  color: inherit;
}

.tools {
  display: flex;
  gap: 20px;
  margin-left: auto;
}

.tools button {
  width: 20px;
}

.content {
  flex: 1;
  padding: 12px 14px 65px 13px;
}

.heading {
  display: flex;
  align-items: center;
  height: 29px;
}

h1 {
  margin: 0 3px 0 0;
  padding-bottom: 4px;
  font-size: 22px;
  font-weight: 400;
  line-height: 28px;
}

.btn {
  gap: 3px;
  height: 29px;
  padding: 0 11px;
  border: 1px solid #007bff;
  border-radius: 3px;
  color: #007bff;
}

.breadcrumb {
  display: flex;
  gap: 7px;
  align-self: flex-start;
  margin-left: auto;
  padding-top: 1px;
  color: #6c757d;
}

.filters {
  display: flex;
  align-items: center;
  margin: 19px 0 12px;
}

.control {
  height: 32px;
  border: 1px solid #ced4da;
  border-radius: 4px;
  background-color: #fff;
  color: #495057;
}

select.control {
  appearance: none;
  padding: 0 24px 0 14px;
  background-image: url("data:image/svg+xml,%3Csvg xmlns='http://www.w3.org/2000/svg' width='10' height='7' viewBox='0 0 10 7'%3E%3Cpath d='M1 1l4 4 4-4' fill='none' stroke='%23343a40' stroke-width='2'/%3E%3C/svg%3E");
  background-repeat: no-repeat;
  background-position: right 5px center;
}

.control::placeholder {
  color: #939ba2;
}

.bulk {
  flex: 0 1 337px;
  margin-right: 3px;
}

.filters .btn {
  height: 32px;
  margin-right: auto;
}

.filters label {
  margin-right: 7px;
}

.status {
  flex: 0 1 341px;
  margin-right: 13px;
}

.keyword {
  flex: 0 1 346px;
  min-width: 0;
  padding: 0 11px;
}

/* Users table */
.card {
  border-radius: 4px;
  background: #fff;
  box-shadow: 0 0 1px rgba(0, 0, 0, 0.125), 0 1px 3px rgba(0, 0, 0, 0.2);
}

table {
  width: 100%;
  table-layout: fixed;
  border-collapse: collapse;
}

.c-check { width: 65px; }
.c-id { width: 54px; }
.c-user { width: 206px; }
.c-email { width: 345px; }
.c-name { width: 205px; }
.c-phone { width: 156px; }
.c-status { width: 140px; }
.c-created { width: 205px; }
.c-actions { width: 290px; }

th,
td {
  padding: 10px 10px 9px;
  border: 1px solid #dee2e6;
  text-align: left;
  vertical-align: top;
}

th {
  height: 41px;
  padding-top: 11px;
  border-top: 0;
  font-weight: 700;
}

td {
  height: 53px;
}

.check {
  padding-left: 19px;
}

.check input {
  display: block;
  width: 12px;
  height: 12px;
  margin: 2px 0 0;
}

.active {
  color: #28a745;
}

.actions {
  display: flex;
  gap: 18px;
  padding: 9px 11px 0;
}

.info {
  color: #17a2b8;
}

.primary {
  color: #007bff;
}

.danger {
  color: #dc3545;
}

.edit {
  margin-right: -6px;
}

.card-footer {
  display: flex;
  align-items: flex-start;
  justify-content: space-between;
  height: 46px;
  padding: 10px 17px;
  border-radius: 0 0 4px 4px;
  background: #f7f7f7;
}

.pagination {
  display: flex;
  font-size: 10px;
  line-height: 23px;
}

.pagination a {
  display: flex;
  align-items: center;
  padding: 0 8px;
  border: 1px solid #dee2e6;
  background: #fff;
}

.pagination a + a {
  border-left: 0;
}

.pagination a:first-child {
  padding: 0 10px;
  border-radius: 3px 0 0 3px;
}

.pagination a:last-child {
  padding: 0 10px;
  border-radius: 0 3px 3px 0;
}

.pagination .disabled {
  color: #6c757d;
}

.flip {
  transform: rotate(180deg);
}

.page-footer {
  height: 10px;
  border-top: 1px solid #dee2e6;
  background: #fff;
}
</style>
